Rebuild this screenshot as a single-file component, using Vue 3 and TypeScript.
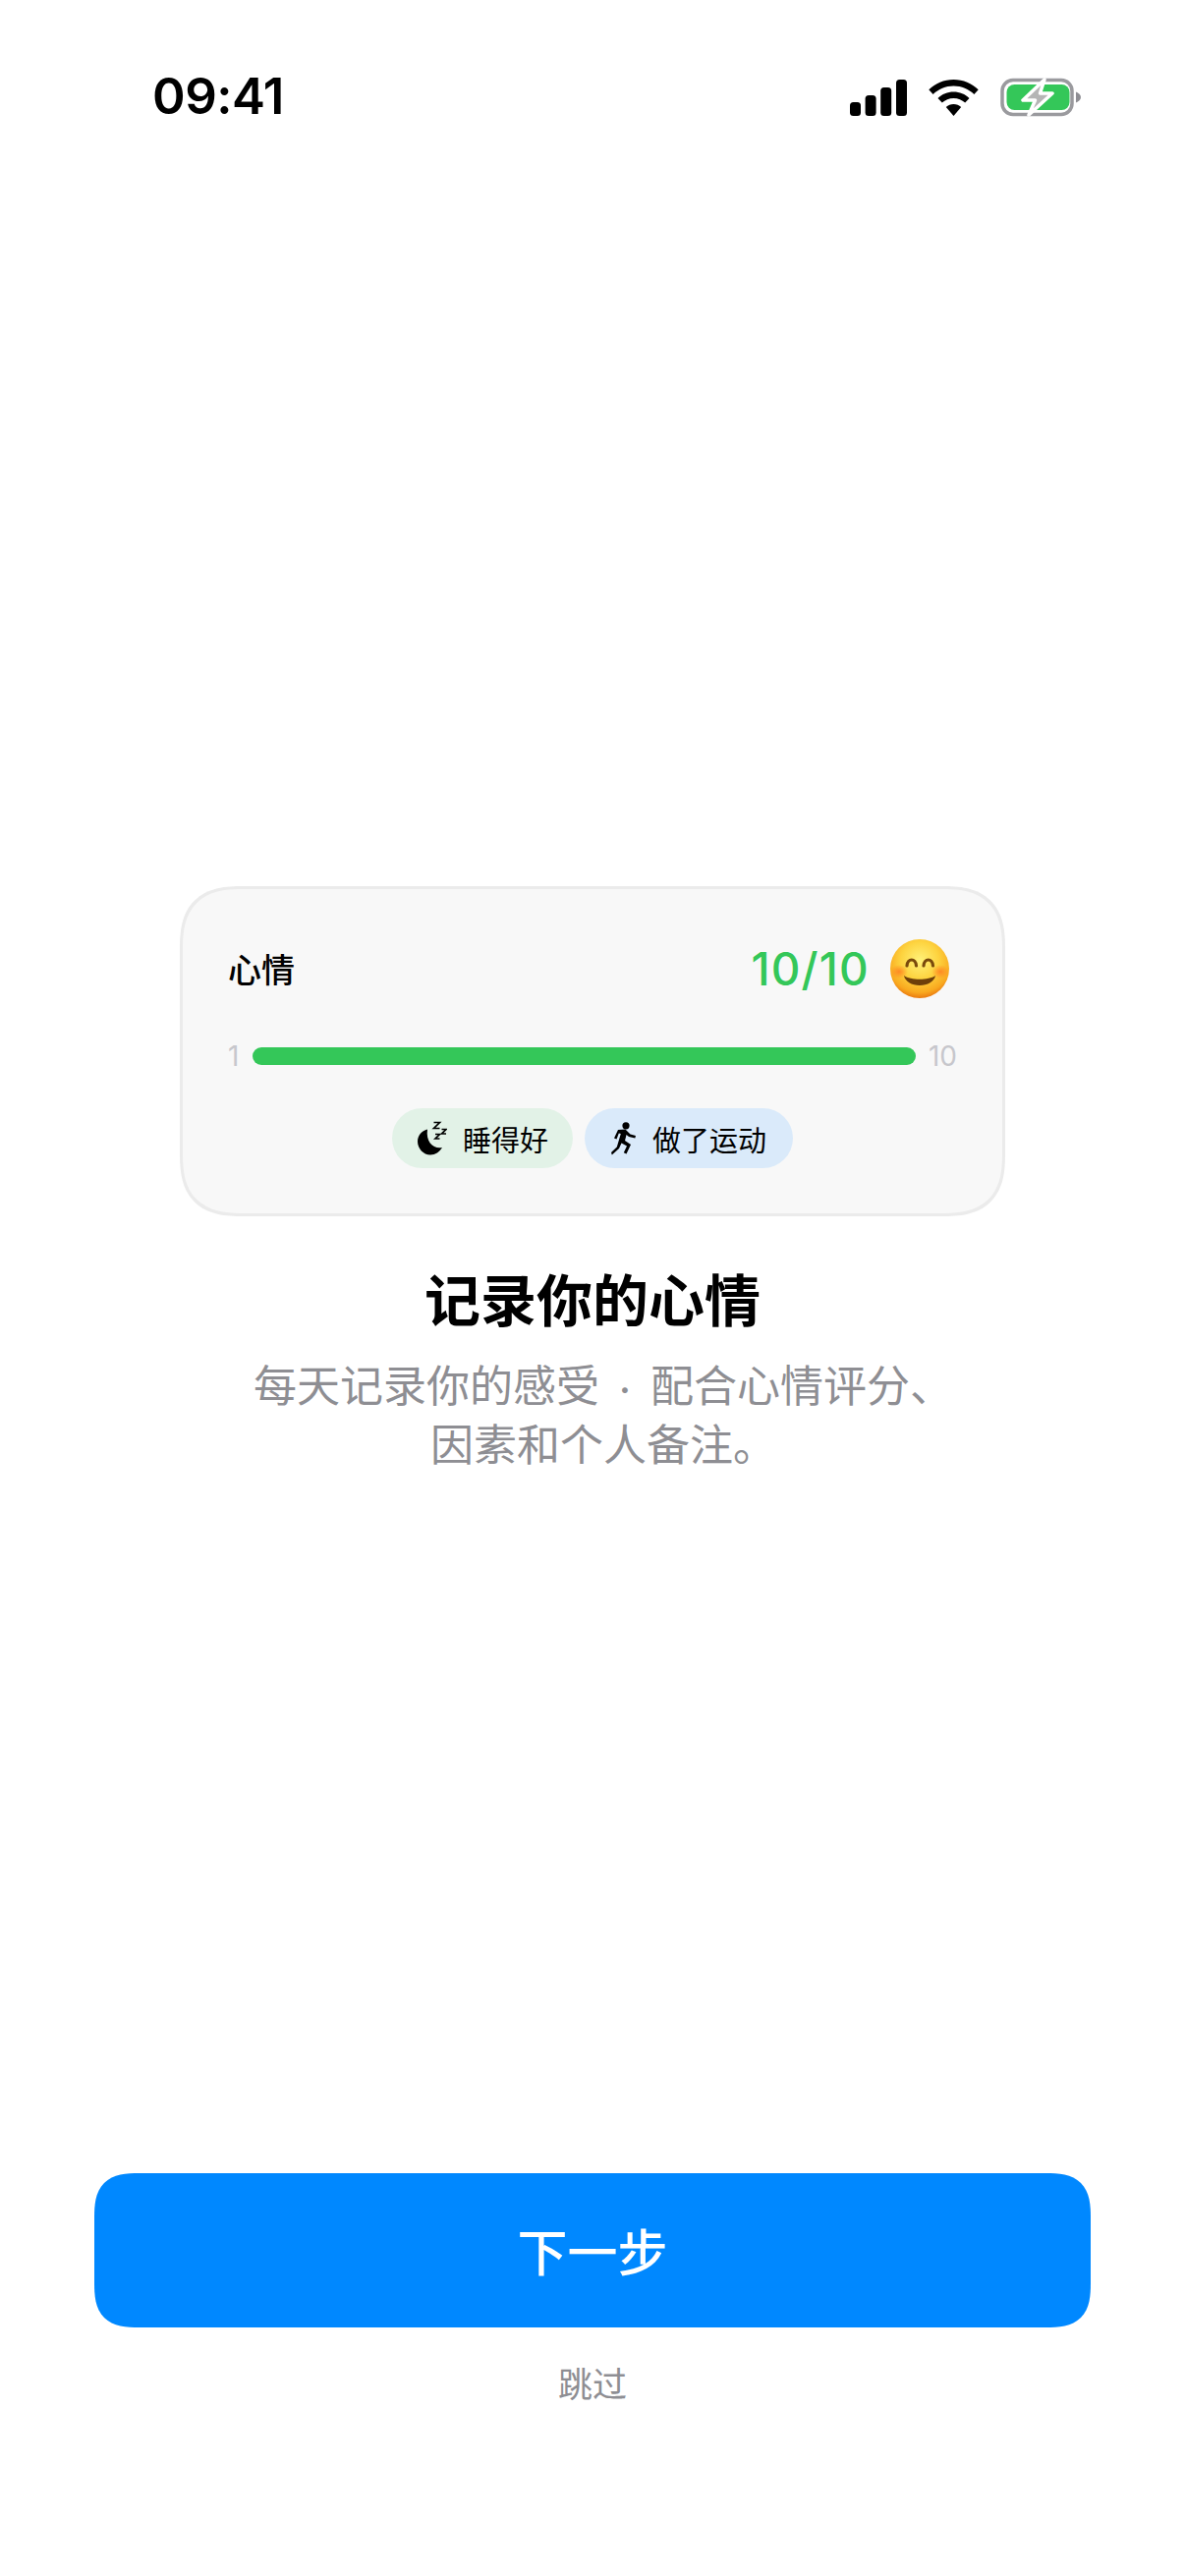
<script setup lang="ts">
const chips = [
  { label: '睡得好', kind: 'sleep' },
  { label: '做了运动', kind: 'run' },
]
</script>

<template>
  <div class="screen">
    <header class="status">
      <span class="time">09:41</span>
      <div class="status-icons">
        <svg class="signal" width="58" height="37" viewBox="0 0 58 37">
          <rect x="0" y="23" width="11" height="14" rx="3.5" />
          <rect x="15.6" y="16" width="11" height="21" rx="3.5" />
          <rect x="31.2" y="8" width="11" height="29" rx="3.5" />
          <rect x="47" y="0" width="11" height="37" rx="3.5" />
        </svg>
        <svg class="wifi" width="51" height="37" viewBox="0 0 51 37">
          <path d="M25.5 0C15.6 0 7 3.900 0.300 10.300L4.600 15C10.200 9.800 17.400 6.600 25.500 6.600S40.800 9.800 46.400 15L50.700 10.300C44 3.900 35.400 0 25.500 0Z" />
          <path d="M25.500 12.500C19.300 12.500 13.800 14.900 9.500 18.900L13.800 23.600C16.900 20.800 21 19 25.500 19S34.100 20.800 37.200 23.600L41.500 18.900C37.200 14.900 31.700 12.500 25.500 12.500Z" />
          <path d="M25.500 25C22.500 25 19.900 26.100 17.800 28L25.500 37L33.200 28C31.100 26.100 28.500 25 25.500 25Z" />
        </svg>
        <svg class="battery" width="82" height="40" viewBox="0 0 82 40">
          <rect x="2" y="2.500" width="71" height="35" rx="11" fill="none" stroke="#9a9a9e" stroke-width="3.500" />
          <rect x="6.500" y="7" width="64" height="26" rx="8" fill="#34c759" />
          <path d="M77 14.500C79.800 15.500 82 17.500 82 20S79.800 24.500 77 25.500Z" fill="#8e8e93" />
          <path d="M45 2L23 23H35.500L29 38L53 16H40.500Z" fill="#b5b5b5" stroke="#fff" stroke-width="3.500" stroke-linejoin="round" />
        </svg>
      </div>
    </header>

    <main class="hero">
      <section class="card">
        <div class="card-head">
          <span class="card-title">心情</span>
          <div class="score">
            <span class="score-value">10/10</span>
            <svg class="emoji" width="62" height="62" viewBox="0 0 62 62">
              <defs>
                <radialGradient id="face" cx="50%" cy="36%" r="64%">
                  <stop offset="0%" stop-color="#fff27a" />
                  <stop offset="50%" stop-color="#fdd33f" />
                  <stop offset="85%" stop-color="#f9a91f" />
                  <stop offset="100%" stop-color="#ea7a10" />
                </radialGradient>
                <radialGradient id="blush" cx="50%" cy="50%" r="50%">
                  <stop offset="0%" stop-color="#ff7a1f" stop-opacity="0.8" />
                  <stop offset="100%" stop-color="#ff7a1f" stop-opacity="0" />
                </radialGradient>
              </defs>
              <circle cx="31" cy="31" r="30" fill="url(#face)" />
              <ellipse cx="10" cy="34" rx="9" ry="7" fill="url(#blush)" />
              <ellipse cx="52" cy="34" rx="9" ry="7" fill="url(#blush)" />
              <path d="M18 28C18.500 20 27 20 27.500 28" fill="none" stroke="#7a4a0c" stroke-width="3.200" stroke-linecap="round" />
              <path d="M35 28C35.500 20 44 20 44.500 28" fill="none" stroke="#7a4a0c" stroke-width="3.200" stroke-linecap="round" />
              <path d="M15 38C22 43 40 43 47 38C46 44 39 48 31 48S16 44 15 38Z" fill="#6d3f0a" />
            </svg>
          </div>
        </div>

        <div class="scale">
          <span class="scale-min">1</span>
          <div class="bar"></div>
          <span class="scale-max">10</span>
        </div>

        <div class="chips">
          <div v-for="chip in chips" :key="chip.kind" class="chip" :class="chip.kind">
            <svg v-if="chip.kind === 'sleep'" class="chip-icon" width="30" height="35" viewBox="0 0 30 35">
              <path d="M10 8.500C4 10 0 15 0 21C0 28 6 34.500 13 34.500C18 34.500 22.500 31.500 25 27C17 29 8 22 10 8.500Z" />
              <path d="M16.500 1.500H22.500L16.500 7.500H22.500M18 13.500H22.500L18 18H22.500M24.500 8.500H29L24.500 13H29" fill="none" stroke="#000" stroke-width="1.700" />
            </svg>
            <svg v-else class="chip-icon" width="26" height="34" viewBox="0 0 26 34">
              <circle cx="15" cy="3.800" r="3.600" />
              <path d="M7 8L14.500 7.500L19.500 12.500L25 14L24.300 16.500L18 15L15.500 13L14 19L20 23L15.500 32.500L12.800 31.200L16 24.500L10.500 21.500L8 27L0.800 33.500L0 31L5.800 25.500L9.800 12L7.800 11.500L5.500 17.500L3 16.500Z" />
            </svg>
            <span>{{ chip.label }}</span>
          </div>
        </div>
      </section>

      <h1 class="title">记录你的心情</h1>
      <p class="desc">每天记录你的感受<span class="dot">·</span>配合心情评分<span class="trim">、</span><br />因素和个人备注<span class="trim">。</span></p>
    </main>

    <footer class="actions">
      <button class="next" type="button">下一步</button>
      <button class="skip" type="button">跳过</button>
    </footer>
  </div>
</template>

<style scoped>
.screen {
  width: 1206px;
  height: 2622px;
  display: flex;
  flex-direction: column;
  background: #fff;
  font-family: "Noto Sans CJK SC", "Noto Sans", sans-serif;
  color: #000;
  overflow: hidden;
}
.status {
  height: 196px;
  box-sizing: border-box;
  padding: 68px 106px 0 155px;
  display: flex;
  justify-content: space-between;
  align-items: flex-start;
}
.time {
  font-family: Inter, sans-serif;
  font-weight: 600;
  font-size: 51px;
  line-height: 60px;
  letter-spacing: -0.5px;
}
.status-icons {
  display: flex;
  align-items: center;
  gap: 22px;
  padding-top: 11px;
}
.hero {
  flex: 1;
  display: flex;
  flex-direction: column;
  align-items: center;
  padding-top: 706px;
}
.card {
  width: 840px;
  height: 336px;
  box-sizing: border-box;
  border: 3px solid #ebebeb;
  border-radius: 64px;
  corner-shape: superellipse(1.4);
  background: #f8f8f8;
  padding: 45px 46px 0;
  display: flex;
  flex-direction: column;
}
.card-head {
  display: flex;
  justify-content: space-between;
  align-items: center;
  height: 70px;
}
.card-title {
  font-size: 34px;
  font-weight: 500;
}
.score {
  display: flex;
  align-items: center;
  gap: 20px;
  padding: 2px 7px 0 0;
}
.score-value {
  font-family: Inter, sans-serif;
  font-size: 46px;
  font-weight: 500;
  letter-spacing: 1.2px;
  color: #34c759;
}
.scale {
  display: flex;
  align-items: center;
  margin-top: 45px;
  height: 20px;
  font-family: Inter, sans-serif;
  font-size: 28px;
  font-weight: 400;
  color: #c7c7cc;
}
.scale-min {
  width: 25px;
}
.bar {
  flex: 1;
  height: 18px;
  border-radius: 9px;
  background: #34c759;
}
.scale-max {
  margin-left: 13px;
}
.chips {
  display: flex;
  justify-content: center;
  gap: 12px;
  margin-top: 43px;
}
.chip {
  height: 61px;
  display: flex;
  align-items: center;
  border-radius: 31px;
  font-size: 29px;
  gap: 16px;
}
.chip.sleep {
  background: #e2f2e7;
  padding: 0 25px 0 26px;
}
.chip.run {
  background: #daeafa;
  padding: 0 27px;
}
.title {
  margin: 42px 0 0;
  font-size: 57px;
  font-weight: 700;
  line-height: 80px;
}
.desc {
  margin: 18px 0 0;
  font-size: 44px;
  line-height: 60px;
  text-align: center;
  color: #8e8e93;
  white-space: nowrap;
}
.dot {
  display: inline-block;
  width: 52px;
  font-family: Inter, sans-serif;
  font-weight: 700;
  font-size: 34px;
  line-height: 30px;
  text-align: center;
}
.trim {
  margin-right: -22px;
}
.actions {
  display: flex;
  flex-direction: column;
  align-items: center;
  padding-bottom: 172px;
}
.next {
  width: 1014px;
  height: 157px;
  border: none;
  border-radius: 46px;
  corner-shape: superellipse(1.5);
  background: #0088ff;
  color: #fff;
  font-family: inherit;
  font-size: 51px;
  font-weight: 500;
  padding: 0 0 2px;
}
.skip {
  margin-top: 31px;
  border: none;
  background: none;
  padding: 0;
  color: #8e8e93;
  font-family: inherit;
  font-size: 35px;
  line-height: 50px;
}
</style>

<style>
html,
body {
  margin: 0;
  background: #fff;
}
</style>
